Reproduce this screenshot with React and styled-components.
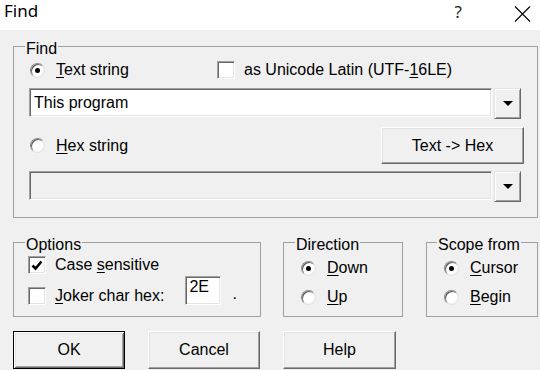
import React from "react";
import styled, { createGlobalStyle } from "styled-components";

const GlobalStyle = createGlobalStyle`
  html, body {
    margin: 0;
    padding: 0;
    background: #f0f0f0;
  }
  body {
    font-family: "Liberation Sans", Arial, sans-serif;
    font-size: 16px;
    color: #000;
  }
`;

const Check = () => (
  <svg width="12" height="11" viewBox="0 0 12 11">
    <path d="M1.5 5.5 L4.5 8.5 L10.5 1.5" fill="none" stroke="#000" strokeWidth="2.6" />
  </svg>
);

const Arrow = () => (
  <svg width="10" height="5" viewBox="0 0 10 5">
    <path d="M0 0 H10 L5 5 Z" fill="#000" />
  </svg>
);

const CloseIcon = () => (
  <svg width="17" height="16" viewBox="0 0 17 16">
    <path d="M1 0.5 L16 15.5 M16 0.5 L1 15.5" stroke="#000" strokeWidth="1.1" fill="none" />
  </svg>
);

const Radio = ({ on, children }) => (
  <Choice>
    <RadioDot $on={on} />
    <span>{children}</span>
  </Choice>
);

const Box = ({ on, children }) => (
  <Choice $gap={9}>
    <CheckBox>{on ? <Check /> : null}</CheckBox>
    <span>{children}</span>
  </Choice>
);

const Combo = ({ value, disabled, mt }) => (
  <ComboRow $mt={mt}>
    <Field $disabled={disabled}>{value}</Field>
    <DropBtn>
      <Arrow />
    </DropBtn>
  </ComboRow>
);

const App = () => {
  return (
    <Window>
      <GlobalStyle />
      <TitleBar>
        <Title>Find</Title>
        <Help>?</Help>
        <Close>
          <CloseIcon />
        </Close>
      </TitleBar>

      <Body>
        <Group $pad="0 16px 15px 15px" $mt={4}>
          <Legend $ml={-4}>Find</Legend>
          <Row $h={24}>
            <Slot $w={188}>
              <Radio on>
                <Key>T</Key>ext string
              </Radio>
            </Slot>
            <Box>
              as Unicode Latin (UTF-<Key>1</Key>6LE)
            </Box>
          </Row>
          <Combo value="This program" mt={6} />
          <Row $h={37} $mt={8}>
            <Radio>
              <Key>H</Key>ex string
            </Radio>
            <PushButton $w={143} $push>
              Text -&gt; Hex
            </PushButton>
          </Row>
          <Combo value="" disabled mt={7} />
        </Group>

        <BottomRow>
          <Group $pad="0 16px 11px 14px" $w={248}>
            <Legend $ml={-3}>Options</Legend>
            <Row $h={22}>
              <Box on>
                Case <Key>s</Key>ensitive
              </Box>
            </Row>
            <Row $h={29} $align="flex-end">
              <Box>
                <Key>J</Key>oker char hex:
              </Box>
              <HexField>2E</HexField>
              <Dot>.</Dot>
            </Row>
          </Group>

          <Group $pad="2px 8px 7px 16px" $w={120}>
            <Legend $ml={-5}>Direction</Legend>
            <Row $h={24}>
              <Radio on>
                <Key>D</Key>own
              </Radio>
            </Row>
            <Row $h={24} $mt={5}>
              <Radio>
                <Key>U</Key>p
              </Radio>
            </Row>
          </Group>

          <Group $pad="2px 8px 7px 16px" $w={112}>
            <Legend $ml={-6}>Scope from</Legend>
            <Row $h={24}>
              <Radio on>
                <Key>C</Key>ursor
              </Radio>
            </Row>
            <Row $h={24} $mt={5}>
              <Radio>
                <Key>B</Key>egin
              </Radio>
            </Row>
          </Group>
        </BottomRow>

        <ButtonRow>
          <PushButton $w={112} $h={38} $def>
            OK
          </PushButton>
          <PushButton $w={112} $h={38}>
            Cancel
          </PushButton>
          <PushButton $w={113} $h={38}>
            Help
          </PushButton>
        </ButtonRow>
      </Body>
    </Window>
  );
};

const Window = styled.div`
  width: 540px;
  height: 370px;
  overflow: hidden;
  background: #f0f0f0;
`;

const TitleBar = styled.div`
  height: 30px;
  background: #fff;
  display: flex;
  align-items: flex-start;
  padding-left: 4px;
  box-sizing: border-box;
`;

const Title = styled.div`
  font-family: "Noto Sans", "Open Sans", sans-serif;
  font-size: 17px;
  line-height: 20px;
  padding-top: 1px;
`;

const Help = styled.div`
  margin-left: auto;
  font-family: "Noto Sans", sans-serif;
  font-size: 17px;
  line-height: 20px;
  padding-top: 2px;
  color: #222;
`;

const Close = styled.div`
  margin: 6px 9px 0 52px;
  display: flex;
`;

const Body = styled.div`
  padding: 0 2px 0 13px;
`;

const Group = styled.fieldset`
  margin: ${(p) => p.$mt || 0}px 0 0 0;
  padding: ${(p) => p.$pad};
  border: 1px solid #a0a0a0;
  min-width: 0;
  width: ${(p) => (p.$w ? `${p.$w}px` : "auto")};
  box-sizing: border-box;
`;

const Legend = styled.legend`
  padding: 6px 1px 0;
  margin-left: ${(p) => p.$ml}px;
  line-height: 18px;
`;

const Row = styled.div`
  display: flex;
  align-items: ${(p) => p.$align || "center"};
  height: ${(p) => p.$h}px;
  margin-top: ${(p) => p.$mt || 0}px;
`;

const Slot = styled.div`
  width: ${(p) => p.$w}px;
  display: flex;
`;

const Choice = styled.label`
  display: flex;
  align-items: center;
  gap: ${(p) => p.$gap || 11}px;
  line-height: 18px;
  white-space: nowrap;
`;

const Key = styled.u`
  text-decoration-thickness: 1px;
  text-underline-offset: 2px;
`;

const RadioDot = styled.span`
  width: 15px;
  height: 15px;
  margin-left: 1px;
  border-radius: 50%;
  background: #fff;
  border: 1px solid;
  border-color: #8a8a8a #e3e3e3 #e3e3e3 #8a8a8a;
  box-shadow: inset 1px 1px 0 #5a5a5a, inset -1px -1px 0 #f4f4f4;
  box-sizing: border-box;
  display: flex;
  align-items: center;
  justify-content: center;
  flex-shrink: 0;

  &::after {
    content: "";
    width: 5px;
    height: 5px;
    border-radius: 50%;
    background: #000;
    display: ${(p) => (p.$on ? "block" : "none")};
  }
`;

const CheckBox = styled.span`
  width: 18px;
  height: 18px;
  background: #fff;
  border: 1px solid;
  border-color: #a0a0a0 #fff #fff #a0a0a0;
  box-shadow: inset 1px 1px 0 #696969, inset -1px -1px 0 #e3e3e3;
  box-sizing: border-box;
  display: flex;
  align-items: center;
  justify-content: center;
  flex-shrink: 0;
`;

const ComboRow = styled.div`
  display: flex;
  align-items: flex-start;
  gap: 2px;
  margin-top: ${(p) => p.$mt}px;
`;

const Field = styled.div`
  flex: 1;
  height: 29px;
  box-sizing: border-box;
  background: ${(p) => (p.$disabled ? "#f0f0f0" : "#fff")};
  border: 1px solid;
  border-color: #a0a0a0 #fff #fff #a0a0a0;
  box-shadow: inset 1px 1px 0 #696969, inset -1px -1px 0 #e3e3e3;
  padding: 0 4px;
  line-height: 27px;
  white-space: nowrap;
`;

const DropBtn = styled.div`
  width: 27px;
  height: 31px;
  box-sizing: border-box;
  background: #f0f0f0;
  border: 1px solid;
  border-color: #e3e3e3 #696969 #696969 #e3e3e3;
  box-shadow: inset 1px 1px 0 #fff, inset -1px -1px 0 #a0a0a0;
  display: flex;
  align-items: center;
  justify-content: center;
`;

const PushButton = styled.div`
  width: ${(p) => p.$w}px;
  height: ${(p) => p.$h || 37}px;
  margin-left: ${(p) => (p.$push ? "auto" : "0")};
  margin-right: ${(p) => (p.$push ? "-3px" : "0")};
  box-sizing: border-box;
  background: #f0f0f0;
  display: flex;
  align-items: center;
  justify-content: center;
  border: 1px solid;
  border-color: ${(p) => (p.$def ? "#000" : "#fff #696969 #696969 #fff")};
  box-shadow: ${(p) =>
    p.$def
      ? "inset 1px 1px 0 #fff, inset -1px -1px 0 #696969, inset 2px 2px 0 #e3e3e3, inset -2px -2px 0 #a0a0a0"
      : "inset -1px -1px 0 #a0a0a0, inset 1px 1px 0 #e3e3e3"};
`;

const HexField = styled.div`
  width: 36px;
  height: 29px;
  margin-left: 21px;
  box-sizing: border-box;
  background: #fff;
  border: 1px solid;
  border-color: #a0a0a0 #fff #fff #a0a0a0;
  box-shadow: inset 1px 1px 0 #696969, inset -1px -1px 0 #e3e3e3;
  padding: 1px 3px 0;
  line-height: 18px;
`;

const Dot = styled.span`
  margin-left: 11px;
  line-height: 18px;
  padding-bottom: 2px;
`;

const BottomRow = styled.div`
  display: flex;
  gap: 22px;
  margin-top: 12px;

  & > fieldset:last-child {
    margin-left: 1px;
  }
`;

const ButtonRow = styled.div`
  display: flex;
  gap: 23px;
  margin-top: 14px;
`;

export default App;
